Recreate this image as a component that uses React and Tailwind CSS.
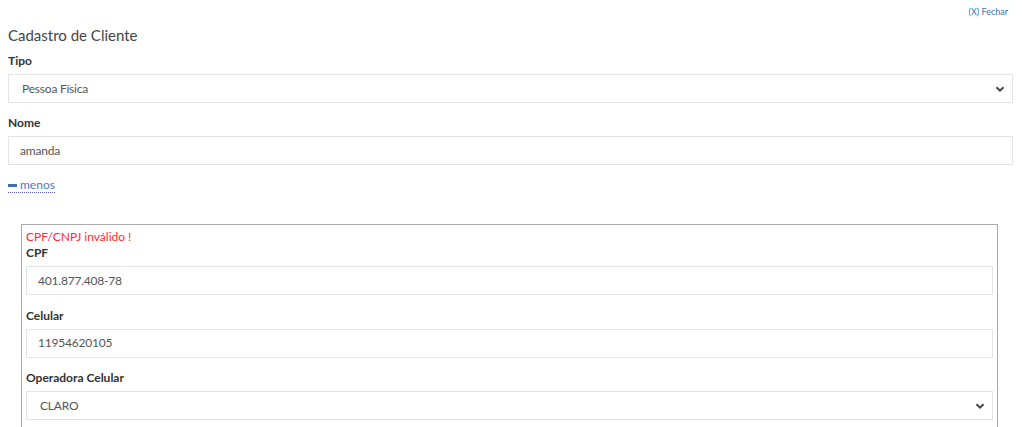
function Chevron() {
  return (
    <svg width="10" height="10" viewBox="0 0 10 10" className="pointer-events-none absolute right-[8px] top-1/2 -translate-y-1/2 text-[#444]">
      <path d="M1.5 3.2 L5 6.7 L8.5 3.2" fill="none" stroke="currentColor" strokeWidth="2" />
    </svg>
  )
}

function Field({ label, value, select }) {
  return (
    <div>
      <label className="block text-[12px] font-bold leading-[16px] text-[#333]">{label}</label>
      <div className="relative mt-[5px]">
        <div
          className={`flex h-[29px] items-center border border-[#e3e3ec] bg-white text-[12px] tracking-[-0.2px] text-[#555] ${
            select ? 'pl-[13px]' : 'pl-[11px]'
          }`}
        >
          {value}
        </div>
        {select && <Chevron />}
      </div>
    </div>
  )
}

export default function App() {
  return (
    <div className="h-[427px] overflow-hidden bg-white font-['Lato',sans-serif]">
      <div className="flex justify-end pr-[16px] pt-[6px]">
        <a className="text-[9px] leading-[12px] text-[#3d6db5]">(X) Fechar</a>
      </div>
      <div className="pl-[8px] pr-[11px]">
        <h1 className="mt-[7px] text-[15px] leading-[20px] text-[#444]">Cadastro de Cliente</h1>
        <div className="mt-[8px] flex flex-col gap-[12px]">
          <Field label="Tipo" value="Pessoa Física" select />
          <Field label="Nome" value="amanda" />
        </div>
        <div className="mt-[13px] flex items-center">
          <a className="flex items-center gap-[3px] border-b border-dotted border-[#5b5bd6] text-[12px] leading-[14px] text-[#4a7cc0]">
            <span className="inline-block h-[3px] w-[9px] bg-[#3d6db5]" />
            menos
          </a>
        </div>
        <div className="ml-[13px] mr-[15px] mt-[31px] border border-[#aaa] px-[4px] pt-[4px] pb-[10px]">
          <p className="text-[12px] leading-[16px] text-[#ff2a2a]">CPF/CNPJ inválido !</p>
          <div className="flex flex-col gap-[12.5px]">
            <Field label="CPF" value="401.877.408-78" />
            <Field label="Celular" value="11954620105" />
            <Field label="Operadora Celular" value="CLARO" select />
          </div>
        </div>
      </div>
    </div>
  )
}
